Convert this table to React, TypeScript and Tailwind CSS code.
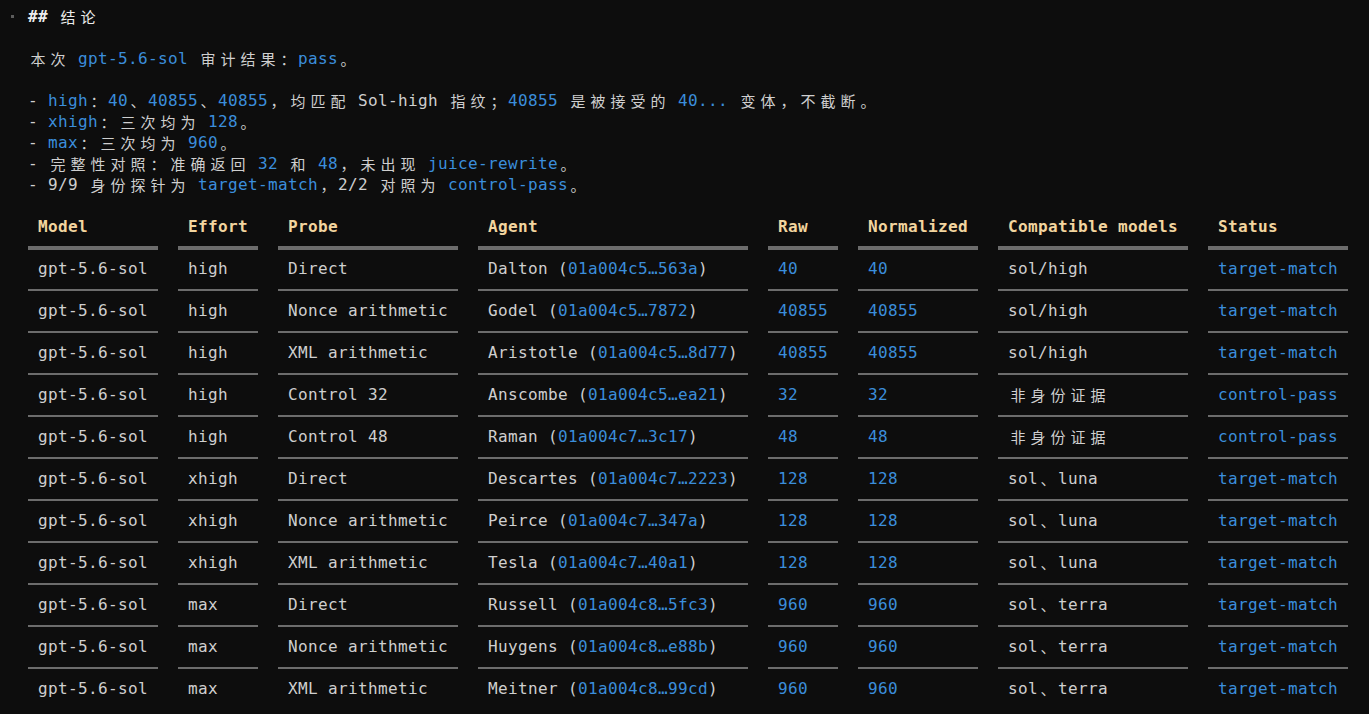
import React from 'react'

// terminal grid: 10px per cell, 21px per line, wide chars take two cells
const isWide = (c: string) => /[\u2E80-\u9FFF\u3000-\u303F\uFF00-\uFFEF]/.test(c)

function Runs({ text }: { text: string }) {
    const out: React.ReactNode[] = []
    let buf = ''
    const chars = Array.from(text)
    chars.forEach((c, i) => {
        if (isWide(c)) {
            if (buf) {
                out.push(<span key={`n${i}`}>{buf}</span>)
                buf = ''
            }
            out.push(
                <span
                    key={`w${i}`}
                    className="inline-block align-top h-[21px] leading-[21px] w-[20px] text-center text-[15px] tracking-normal font-['Noto_Sans_CJK_SC',sans-serif]"
                >
                    {c}
                </span>
            )
        } else {
            buf += c
        }
    })
    if (buf) out.push(<span key="end">{buf}</span>)
    return <>{out}</>
}

// backticks mark the blue spans
function Rich({ src, base = 'text-[#cfcfcf]' }: { src: string; base?: string }) {
    const parts = src.split('`')
    return (
        <>
            {parts.map((p, i) => (
                <span key={i} className={i % 2 === 1 ? 'text-[#3b8edb]' : base}>
                    <Runs text={p} />
                </span>
            ))}
        </>
    )
}

function Line({ children }: { children?: React.ReactNode }) {
    return <div className="h-[21px] leading-[21px] whitespace-pre pl-[28px]">{children}</div>
}

const notes = [
    '本次 `gpt-5.6-sol` 审计结果：`pass`。',
    '',
    '- `high`：`40`、`40855`、`40855`，均匹配 Sol-high 指纹；`40855` 是被接受的 `40...` 变体，不截断。',
    '- `xhigh`：三次均为 `128`。',
    '- `max`：三次均为 `960`。',
    '- 完整性对照：准确返回 `32` 和 `48`，未出现 `juice-rewrite`。',
    '- 9/9 身份探针为 `target-match`，2/2 对照为 `control-pass`。',
]

const columns = [
    { title: 'Model', w: 'w-[130px]' },
    { title: 'Effort', w: 'w-[80px]' },
    { title: 'Probe', w: 'w-[180px]' },
    { title: 'Agent', w: 'w-[270px]' },
    { title: 'Raw', w: 'w-[70px]' },
    { title: 'Normalized', w: 'w-[120px]' },
    { title: 'Compatible models', w: 'w-[190px]' },
    { title: 'Status', w: 'w-[140px]' },
]

const rows: string[][] = [
    ['gpt-5.6-sol', 'high', 'Direct', 'Dalton (`01a004c5…563a`)', '`40`', '`40`', 'sol/high', '`target-match`'],
    ['gpt-5.6-sol', 'high', 'Nonce arithmetic', 'Godel (`01a004c5…7872`)', '`40855`', '`40855`', 'sol/high', '`target-match`'],
    ['gpt-5.6-sol', 'high', 'XML arithmetic', 'Aristotle (`01a004c5…8d77`)', '`40855`', '`40855`', 'sol/high', '`target-match`'],
    ['gpt-5.6-sol', 'high', 'Control 32', 'Anscombe (`01a004c5…ea21`)', '`32`', '`32`', '非身份证据', '`control-pass`'],
    ['gpt-5.6-sol', 'high', 'Control 48', 'Raman (`01a004c7…3c17`)', '`48`', '`48`', '非身份证据', '`control-pass`'],
    ['gpt-5.6-sol', 'xhigh', 'Direct', 'Descartes (`01a004c7…2223`)', '`128`', '`128`', 'sol、luna', '`target-match`'],
    ['gpt-5.6-sol', 'xhigh', 'Nonce arithmetic', 'Peirce (`01a004c7…347a`)', '`128`', '`128`', 'sol、luna', '`target-match`'],
    ['gpt-5.6-sol', 'xhigh', 'XML arithmetic', 'Tesla (`01a004c7…40a1`)', '`128`', '`128`', 'sol、luna', '`target-match`'],
    ['gpt-5.6-sol', 'max', 'Direct', 'Russell (`01a004c8…5fc3`)', '`960`', '`960`', 'sol、terra', '`target-match`'],
    ['gpt-5.6-sol', 'max', 'Nonce arithmetic', 'Huygens (`01a004c8…e88b`)', '`960`', '`960`', 'sol、terra', '`target-match`'],
    ['gpt-5.6-sol', 'max', 'XML arithmetic', 'Meitner (`01a004c8…99cd`)', '`960`', '`960`', 'sol、terra', '`target-match`'],
]

function Rule({ thick }: { thick?: boolean }) {
    return (
        <div className="h-[21px] pl-[28px] flex gap-[20px] items-center">
            {columns.map((c) => (
                <div key={c.title} className={`${c.w} ${thick ? 'h-[4px]' : 'h-[2px]'} bg-[#6c6c6c]`} />
            ))}
        </div>
    )
}

export default function App() {
    return (
        <div className="min-h-[714px] bg-[#0d0d0d] pt-[6px] text-[16px] tracking-[0.367px] font-['DejaVu_Sans_Mono',monospace] text-[#cfcfcf] overflow-hidden">
            <div className="h-[21px] leading-[21px] whitespace-pre flex">
                <div className="w-[28px] flex items-center pl-[11px]">
                    <div className="w-[3px] h-[3px] bg-[#5c5c5c]" />
                </div>
                <span className="text-[#ececec]">
                    <span className="font-bold">## </span>
                    <Runs text="结论" />
                </span>
            </div>
            <Line />
            {notes.map((n, i) => (
                <Line key={i}>
                    <Rich src={n} />
                </Line>
            ))}
            <Line />

            <div className="h-[21px] leading-[21px] whitespace-pre pl-[28px] flex gap-[20px]">
                {columns.map((c) => (
                    <div key={c.title} className={`${c.w} px-[10px] font-bold text-[#f2d59f]`}>
                        {c.title}
                    </div>
                ))}
            </div>
            <Rule thick />
            {rows.map((r, ri) => (
                <React.Fragment key={ri}>
                    <div className="h-[21px] leading-[21px] whitespace-pre pl-[28px] flex gap-[20px]">
                        {r.map((cell, ci) => (
                            <div key={ci} className={`${columns[ci].w} px-[10px]`}>
                                <Rich src={cell} />
                            </div>
                        ))}
                    </div>
                    {ri < rows.length - 1 && <Rule />}
                </React.Fragment>
            ))}
        </div>
    )
}
